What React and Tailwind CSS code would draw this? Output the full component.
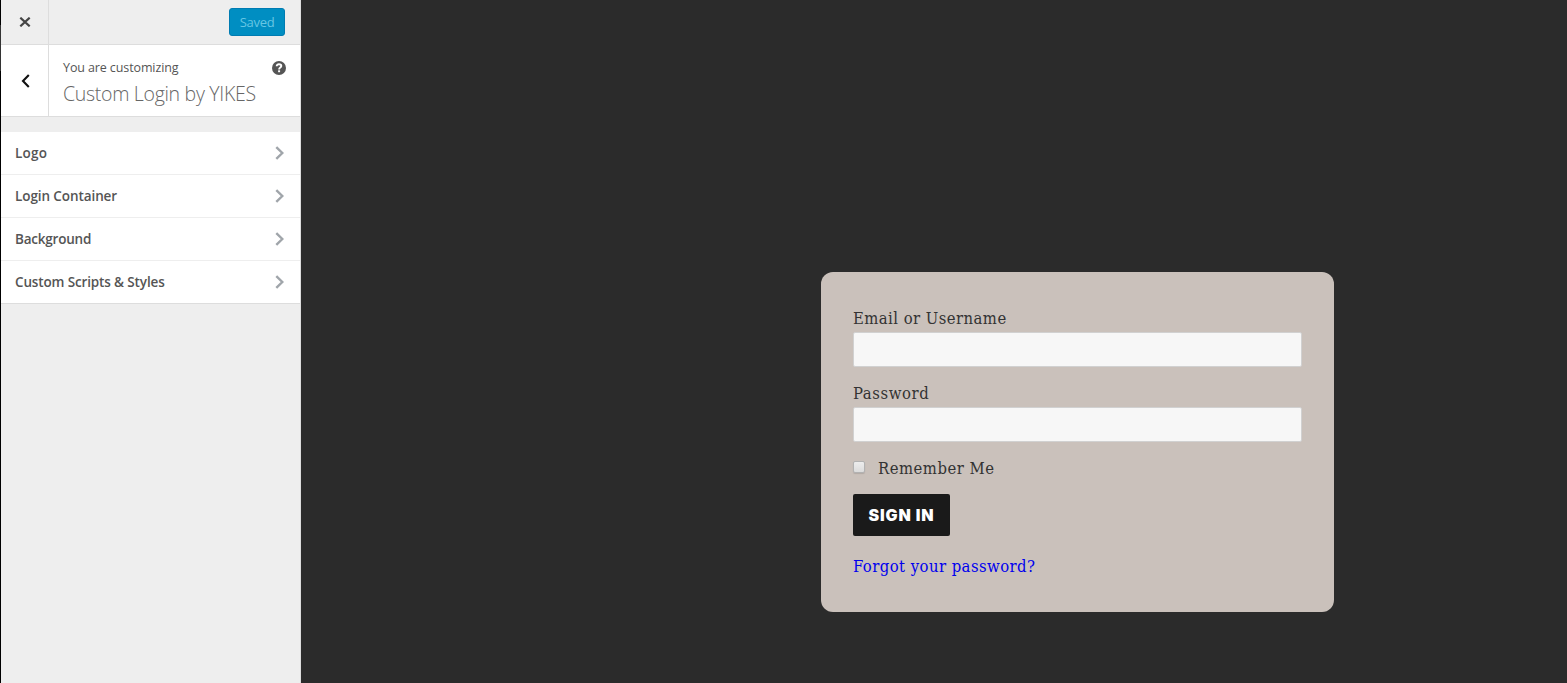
import React from 'react';

const sections = [
  { name: 'Logo', track: 'tracking-[0.25px]' },
  { name: 'Login Container', track: 'tracking-[-0.09px]' },
  { name: 'Background', track: 'tracking-[-0.21px]' },
  { name: 'Custom Scripts & Styles', track: 'tracking-[-0.14px]' },
];

function CloseIcon() {
  return (
    <svg className="h-[10px] w-[12px]" viewBox="0 0 12 10" fill="none" stroke="#444" strokeWidth="2.2">
      <path d="M1.300 .7 10.700 9.300M10.700 .7 1.300 9.300" />
    </svg>
  );
}

function BackIcon() {
  return (
    <svg className="ml-[2px] h-[14px] w-[9px]" viewBox="0 0 9 14" fill="none" stroke="#111" strokeWidth="2.1">
      <path d="M7.800 1 2 7l5.800 6" />
    </svg>
  );
}

function ChevronIcon() {
  return (
    <svg className="h-[14px] w-[9px]" viewBox="0 0 9 14" fill="none" stroke="#a0a5aa" strokeWidth="2.4">
      <path d="M1.300 1.100 7.300 7l-6 5.900" />
    </svg>
  );
}

function HelpIcon() {
  return (
    <svg className="h-[14px] w-[14px]" viewBox="0 0 14 14" fill="none">
      <circle cx="7" cy="7" r="7" fill="#555" />
      <path d="M4.700 5.300C4.700 4 5.700 3.300 7 3.300s2.300.7 2.300 1.800C9.300 6.600 7.100 6.500 7.100 8.400" stroke="#fff" strokeWidth="1.9" />
      <path d="M6.100 9.300h2v1.900h-2z" fill="#fff" />
    </svg>
  );
}

function Sidebar() {
  return (
    <aside className="flex w-[301px] shrink-0 border-r border-[#ddd] bg-[#eee] font-['Open_Sans','Noto_Sans',sans-serif]">
      <div className="w-px bg-black pt-[25px]">
        <div className="h-[46px] bg-[#333]" />
      </div>
      <div className="flex min-w-0 flex-1 flex-col">
        <header className="flex h-[45px] border-b border-[#ddd]">
          <button className="flex w-12 items-center justify-center border-r border-[#ddd]" aria-label="Close">
            <CloseIcon />
          </button>
          <div className="flex flex-1 items-start justify-end pt-2 pr-[15px]">
            <button className="flex h-7 w-14 items-center justify-center rounded-[3px] border border-[#007cb2] bg-[#008ec2] text-[13px] text-[#66c6e4]">
              <span className="mt-px tracking-[-0.3px]">Saved</span>
            </button>
          </div>
        </header>
        <div className="flex h-[72px] border-b border-[#ddd] bg-white">
          <button className="flex w-12 items-center justify-center border-r border-[#ddd]" aria-label="Back">
            <BackIcon />
          </button>
          <div className="flex flex-1 justify-between pt-[13px] pr-[14px] pl-[14px] whitespace-nowrap">
            <div>
              <div className="h-5 text-[12.5px] leading-5 tracking-[-0.11px] text-[#555]">You are customizing</div>
              <h1 className="h-8 text-[19.5px] leading-8 font-light tracking-[-0.3px] text-[#666]">Custom Login by YIKES</h1>
            </div>
            <div className="-ml-4 pt-[3px]">
              <HelpIcon />
            </div>
          </div>
        </div>
        <ul className="mt-[15px] border-b border-[#ddd] bg-white">
          {sections.map((s, i) => (
            <li
              key={s.name}
              className={`flex items-center justify-between pr-4 pl-[14px] ${i < 3 ? 'h-[43px] border-b border-[#eee]' : 'h-[42px]'}`}
            >
              <span className={`text-[13.5px] leading-5 font-semibold whitespace-nowrap text-[#555] ${s.track}`}>{s.name}</span>
              <ChevronIcon />
            </li>
          ))}
        </ul>
      </div>
    </aside>
  );
}

function Field({ label, type, track }) {
  return (
    <label className="block h-[75px]">
      <span className={`block h-7 text-[16.5px] leading-[29px] ${track}`}>{label}</span>
      <input type={type} className="block h-[35px] w-full rounded-[2px] border border-[#d1d1d1] bg-[#f7f7f7]" />
    </label>
  );
}

export default function App() {
  return (
    <div className="flex h-[683px] w-[1567px] overflow-hidden bg-[#2b2b2b]">
      <Sidebar />
      <main className="flex-1 pt-[272px] pl-[520px]">
        <form className="h-[340px] w-[513px] rounded-[12px] bg-[#cac1bb] px-8 pt-8 font-['DejaVu_Serif_Condensed','DejaVu_Serif',serif] text-[#333] whitespace-nowrap">
          <Field label="Email or Username" type="text" track="tracking-[0.45px]" />
          <Field label="Password" type="password" track="tracking-[0.6px]" />
          <label className="flex h-7 items-start pt-[7px]">
            <span className="h-3 w-3 rounded-[2px] border border-[#b2b2b2] bg-linear-to-b from-[#ededed] to-[#dcdcdc] shadow-[0_1px_1px_rgba(0,0,0,0.12)]" />
            <span className="-mt-[7px] ml-[13px] text-[16.5px] leading-[29px] tracking-[0.5px]">Remember Me</span>
          </label>
          <button
            type="button"
            className="mt-3 flex h-[42px] w-[97px] items-center justify-center rounded-[2px] bg-[#1a1a1a] font-['Inter',sans-serif] text-[16px] font-black text-white"
          >
            <span className="tracking-[0.9px]">SIGN IN</span>
          </button>
          <a className="mt-4 block text-[16.5px] leading-[29px] tracking-[0.45px] text-[#0000ee]">Forgot your password?</a>
        </form>
      </main>
    </div>
  );
}
